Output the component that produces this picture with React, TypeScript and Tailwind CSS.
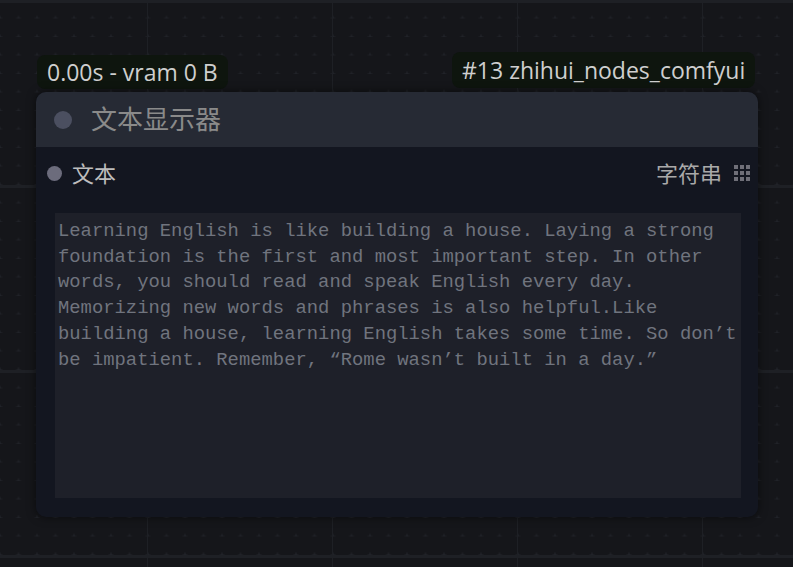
import React from 'react';

const TEXT =
  'Learning English is like building a house. Laying a strong foundation is the first and most important step. In other words, you should read and speak English every day. Memorizing new words and phrases is also helpful.Like building a house, learning English takes some time. So don’t be impatient. Remember, “Rome wasn’t built in a day.”';

const ui = { fontFamily: '"Open Sans", "Noto Sans CJK SC", sans-serif' };
const cjk = { fontFamily: '"Noto Sans", "Noto Sans CJK SC", sans-serif' };

function CanvasGrid() {
  return (
    <svg className="absolute inset-0 h-full w-full" width="793" height="567">
      <defs>
        <pattern id="dots" width="18.5" height="18.5" patternUnits="userSpaceOnUse">
          <path d="M18.5 16v5M16 18.5h5M0 16v5M-2.5 18.5h5" stroke="#23262c" strokeWidth="1" />
        </pattern>
        <pattern id="lines" x="-37" y="0" width="185" height="185" patternUnits="userSpaceOnUse">
          <rect x="184" y="0" width="3" height="185" fill="#1e2025" />
          <rect x="0" y="0" width="185" height="3" fill="#1e2025" />
        </pattern>
      </defs>
      <rect width="100%" height="100%" fill="#15161a" />
      <rect width="100%" height="100%" fill="url(#dots)" />
      <rect width="100%" height="100%" fill="url(#lines)" />
    </svg>
  );
}

function Badge({ children, className }: { children: React.ReactNode; className: string }) {
  return (
    <div
      className={`absolute flex items-center rounded-lg bg-[#0e150e] px-[10px] text-[23px] leading-none text-[#cfcfcf] ${className}`}
      style={ui}
    >
      {children}
    </div>
  );
}

function GridIcon() {
  return (
    <div className="grid grid-cols-3 gap-[2px]">
      {Array.from({ length: 9 }).map((_, i) => (
        <span key={i} className="h-[4px] w-[4px] bg-[#6f6f78]" />
      ))}
    </div>
  );
}

export default function App() {
  return (
    <div className="relative h-[567px] w-[793px] overflow-hidden bg-[#15161a]">
      <CanvasGrid />

      <Badge className="left-[37px] top-[55px] h-[34px]">0.00s - vram 0 B</Badge>
      <Badge className="left-[452px] top-[52px] h-[36px]">#13 zhihui_nodes_comfyui</Badge>

      {/* Node */}
      <div className="absolute left-[36px] top-[92px] flex h-[425px] w-[722px] flex-col overflow-hidden rounded-[10px] bg-[#131620] shadow-[0_0_10px_rgba(0,0,0,0.55)]">
        {/* Title */}
        <div className="flex h-[55px] shrink-0 items-center gap-[19px] bg-[#262a34] pl-[18px]">
          <span className="h-[18px] w-[18px] rounded-full bg-[#4b4f60]" />
          <span className="text-[26px] text-[#8a8a8a]" style={cjk}>
            文本显示器
          </span>
        </div>

        {/* Input row */}
        <div className="flex h-[52px] shrink-0 items-center justify-between pl-[11px] pr-[8px]">
          <div className="flex items-center gap-[10px]">
            <span className="h-[15px] w-[15px] rounded-full bg-[#6c6c7c]" />
            <span className="text-[22px] text-[#bdbdbd]" style={cjk}>
              文本
            </span>
          </div>
          <div className="flex items-center gap-[12px]">
            <span className="text-[22px] text-[#a9a9a9]" style={cjk}>
              字符串
            </span>
            <GridIcon />
          </div>
        </div>

        {/* Text area */}
        <div className="mb-[19px] ml-[19px] mr-[17px] mt-[14px] flex-1">
          <textarea
            readOnly
            value={TEXT}
            spellCheck={false}
            className="h-full w-full resize-none overflow-hidden bg-[#1e2029] px-[3px] pt-[6px] text-[18.85px] leading-[25.7px] text-[#70747e] outline-none"
            style={{ fontFamily: '"Liberation Mono", "Noto Sans CJK SC", monospace' }}
          />
        </div>
      </div>
    </div>
  );
}
